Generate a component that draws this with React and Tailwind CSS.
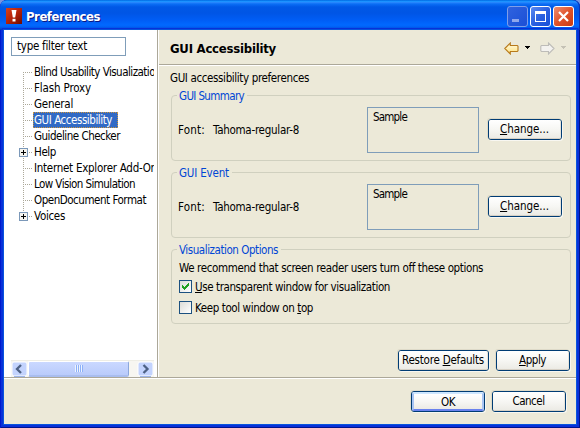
import React, { useLayoutEffect, useRef } from "react";

// Text whose tracking is computed so that it occupies `w` pixels.
function T({ w, className = "", children }) {
  const ref = useRef(null);
  useLayoutEffect(() => {
    const el = ref.current;
    el.style.letterSpacing = "0px";
    const natural = el.getBoundingClientRect().width;
    el.style.letterSpacing = (w - natural) / el.textContent.length + "px";
  }, [w]);
  return (
    <span ref={ref} className={"inline-block whitespace-pre " + className}>
      {children}
    </span>
  );
}

function Key({ children }) {
  return <span className="underline decoration-1 underline-offset-1">{children}</span>;
}

function Button({ className, primary, children }) {
  return (
    <div className={"h-[21px] shrink-0 rounded-[3px] border border-[#003c74] shadow-[1px_1px_0_#f8f7f1,-1px_-1px_0_#dedac8] " + className}>
      <div
        className={
          "flex h-full items-center justify-center rounded-[2px] bg-linear-to-b from-white via-[#f7f7f4] to-[#ecebe5] leading-[16px] " +
          (primary
            ? "border-2 border-t-[#cee7ff] border-x-[#a9c5f3] border-b-[#6982ee]"
            : "border-b border-b-[#d6d0c5] border-r border-r-[#e6e3db]")
        }
      >
        {children}
      </div>
    </div>
  );
}

function Group({ title, w, className, children }) {
  return (
    <section className={"relative rounded-[4px] border border-[#d0d0bf] " + className}>
      <h2 className="absolute -top-[8px] left-[5px] bg-[#ece9d8] pl-[2px] pr-[3px] leading-[16px] text-[#0046d5]">
        <T w={w}>{title}</T>
      </h2>
      {children}
    </section>
  );
}

function FontRow() {
  return (
    <div className="flex pt-[11px] pl-[6px]">
      <div className="flex w-[189px] shrink-0 pt-[15px] leading-[16px]">
        <T w={27} className="mr-[8px]">Font:</T>
        <T w={86}>Tahoma-regular-8</T>
      </div>
      <div className="h-[46px] w-[112px] shrink-0 border border-[#7f9db9] pl-[5px] pt-[1px] leading-[16px]">
        <T w={34}>Sample</T>
      </div>
      <Button className="ml-[9px] mt-[12px] w-[74px]">
        <T w={49}><Key>C</Key>hange...</T>
      </Button>
    </div>
  );
}

const tree = [
  ["Blind Usability Visualization", 127],
  ["Flash Proxy", 57],
  ["General", 39],
  ["GUI Accessibility", 79, "selected"],
  ["Guideline Checker", 86],
  ["Help", 22, "branch"],
  ["Internet Explorer Add-Ons", 128],
  ["Low Vision Simulation", 101],
  ["OpenDocument Format", 112],
  ["Voices", 31, "branch"],
];

function TreeRow({ label, w, kind, first, last }) {
  return (
    <li className="flex h-[16px] leading-[16px]">
      <svg className="h-[16px] w-[22px] shrink-0" viewBox="0 0 22 16" shapeRendering="crispEdges" fill="none">
        <path d={first ? "M12.5 8V16" : last ? "M12.5 0V8" : "M12.5 0V16"} stroke="#aca899" strokeDasharray="1 1" />
        <path d="M12 8.5H21" stroke="#aca899" strokeDasharray="1 1" />
        {kind === "branch" && (
          <g>
            <rect x="8.5" y="4.5" width="8" height="8" rx="1" fill="#f5f4ef" stroke="#7b98b9" />
            <path d="M10 8.5H15M12.5 6V11" stroke="#000" />
          </g>
        )}
      </svg>
      {kind === "selected" ? (
        <span className="h-[16px] w-[85px] bg-[#316ac5] text-white outline-1 -outline-offset-1 outline-dotted outline-[#ce953a]">
          <T w={w} className="pl-px">{label}</T>
        </span>
      ) : (
        <T w={w} className="ml-px">{label}</T>
      )}
    </li>
  );
}

function ScrollArrow({ right }) {
  return (
    <svg className="h-[16px] w-[17px] shrink-0" viewBox="0 0 17 16">
      <rect x="1" y="1" width="15" height="14" rx="2" fill="#c3d3fd" stroke="#fff" />
      <path d="M3 15.5H14" stroke="#9eb5e8" />
      <path d={right ? "M6.5 4L10.5 8L6.5 12" : "M10 4L6 8L10 12"} fill="none" stroke="#4d6185" strokeWidth="2.3" />
    </svg>
  );
}

function NavArrow({ forward }) {
  return (
    <svg className="h-[13px] w-[15px]" viewBox="0 0 15 13">
      <defs>
        <linearGradient id="gold" x1="0" y1="0" x2="0" y2="1">
          <stop offset="0" stopColor="#fffbe4" />
          <stop offset="1" stopColor="#ffe17a" />
        </linearGradient>
      </defs>
      <path
        d={forward ? "M14 6.5L8.5 1V3.5H1.5L.8 4.2V8.8L1.5 9.5H8.5V12Z" : "M.8 6.5L6.3 1V3.5H13.3L14 4.2V8.8L13.3 9.5H6.3V12Z"}
        fill={forward ? "#f3f2ef" : "url(#gold)"}
        stroke={forward ? "#bdbcb8" : "#b7791a"}
        strokeWidth="1.1"
      />
    </svg>
  );
}

function Caret({ className }) {
  return (
    <svg className={"h-[3px] w-[5px] " + className} viewBox="0 0 5 3" shapeRendering="crispEdges" fill="currentColor">
      <path d="M0 0H5V1H4V2H3V3H2V2H1V1H0Z" />
    </svg>
  );
}

function Checkbox({ checked }) {
  return (
    <span className="mr-[3px] flex h-[13px] w-[13px] shrink-0 border border-[#1c5180] bg-linear-to-br from-[#dcdcd7] to-white">
      {checked && (
        <svg className="h-[11px] w-[11px]" viewBox="0 0 11 11" shapeRendering="crispEdges" fill="#21a121">
          <path d="M2 4H3V5H4V6H5V5H6V4H7V3H8V2H9V5H8V6H7V7H6V8H5V9H4V8H3V7H2Z" />
        </svg>
      )}
    </span>
  );
}

export default function App() {
  return (
    <div className="h-[428px] w-[580px] overflow-hidden bg-[#7a96df] font-['DejaVu_Sans_Condensed','DejaVu_Sans',sans-serif] text-[11.5px] text-black [font-stretch:condensed]">
      <div className="flex h-full flex-col rounded-t-[7px] bg-[#0831d9] shadow-[inset_1px_0_0_#0019cf,inset_-1px_0_0_#00138c,inset_0_-1px_0_#00138c]">
        <header className="flex h-[30px] shrink-0 items-start rounded-t-[7px] bg-[linear-gradient(to_bottom,#0458d8_0px,#0997ff_1px,#2e8eff_2px,#0a6ef5_4px,#0058e6_7px,#0055e5_13px,#005df5_20px,#0169ff_25px,#0060f5_27px,#0046d0_29px,#0038bb_30px)] pl-[6px] pr-[6px] pt-[6px] shadow-[inset_-1px_0_0_#0831b9]">
          <svg className="mt-[2px] h-[16px] w-[16px]" viewBox="0 0 16 16">
            <defs>
              <linearGradient id="red" x1="0" y1="0" x2="1" y2="1">
                <stop offset="0" stopColor="#d9411b" />
                <stop offset=".5" stopColor="#b52209" />
                <stop offset="1" stopColor="#6e0b00" />
              </linearGradient>
            </defs>
            <rect width="16" height="16" fill="url(#red)" />
            <path d="M5.5 2H10.5L9.2 9.5H6.8Z" fill="#fff" />
            <rect x="6.5" y="10.8" width="3" height="2.7" fill="#fff" />
          </svg>
          <h1 className="ml-[4px] grow text-[13px] font-bold leading-[22px] text-white [text-shadow:1px_1px_0_#0a1883]">
            <T w={74}>Preferences</T>
          </h1>
          <div className="flex gap-[2px] text-white">
            <div className="h-[21px] w-[21px] rounded-[3px] border border-[#7f9ee8] bg-linear-to-br from-[#2f62df] to-[#1b4fd6]">
              <div className="ml-[4px] mt-[12px] h-[3px] w-[7px] bg-[#8fa7ec]" />
            </div>
            <div className="h-[21px] w-[21px] rounded-[3px] border border-white bg-linear-to-br from-[#5b8af0] via-[#2a60e0] to-[#1550d8]">
              <div className="ml-[4px] mt-[4px] h-[11px] w-[11px] border border-t-[3px] border-white" />
            </div>
            <div className="h-[21px] w-[21px] rounded-[3px] border border-white bg-linear-to-br from-[#ec8c6f] via-[#e0522a] to-[#c83a10]">
              <svg className="h-[19px] w-[19px]" viewBox="0 0 19 19">
                <path d="M5 5L14 14M14 5L5 14" stroke="#fff" strokeWidth="2.2" />
              </svg>
            </div>
          </div>
        </header>

        <div className="mx-[4px] mb-[4px] flex grow flex-col bg-[#ece9d8] shadow-[0_0_0_1px_#0855dd,0_0_0_2px_#0831d9]">
          <div className="flex h-[347px] shrink-0">
            <aside className="flex w-[153px] shrink-0 flex-col bg-white pl-[7px] pr-[3px] pt-[7px]">
              <div className="h-[19px] w-[115px] border border-[#7f9db9] pl-[5px] leading-[17px]">
                <T w={70}>type filter text</T>
              </div>
              <ul className="mt-[8px] grow overflow-hidden">
                {tree.map(([label, w, kind], i) => (
                  <TreeRow key={label} label={label} w={w} kind={kind} first={i === 0} last={i === tree.length - 1} />
                ))}
              </ul>
              <div className="flex h-[17px] border-t border-[#eeede5] bg-[#f7f6f1]">
                <ScrollArrow />
                <div className="flex w-[101px] items-center justify-center gap-px rounded-[2px] border border-b-2 border-white border-b-[#a9bdee] border-r-[#8ba7dc] bg-linear-to-b from-[#cad8ff] to-[#b9cbfb]">
                  {[0, 1, 2, 3].map((i) => (
                    <i key={i} className="h-[7px] w-px bg-[#eef4fe] shadow-[1px_0_0_#8cb0f8]" />
                  ))}
                </div>
                <span className="grow" />
                <ScrollArrow right />
              </div>
            </aside>
            <div className="w-[2px] shrink-0 border-l border-[#aca899] bg-white" />

            <main className="flex grow flex-col">
              <div className="flex h-[36px] shrink-0 border-b border-white">
                <div className="flex h-[35px] grow border-b border-[#aca899] pl-[11px] pr-[10px]">
                  <h2 className="grow pt-[10px] text-[13px] font-bold leading-[17px]">
                    <T w={106}>GUI Accessibility</T>
                  </h2>
                  <div className="flex pt-[12px]">
                    <NavArrow />
                    <Caret className="ml-[6px] mt-[4px]" />
                    <span className="w-[10px]" />
                    <NavArrow forward />
                    <Caret className="ml-[6px] mt-[4px] text-[#c5c2b5]" />
                  </div>
                </div>
              </div>
              <div className="pl-[12px] pr-[5px] pt-[4px]">
                <p className="-ml-px leading-[16px]">
                  <T w={139}>GUI accessibility preferences</T>
                </p>
                <Group title="GUI Summary" w={65} className="mt-[9px] h-[66px]">
                  <FontRow />
                </Group>
                <Group title="GUI Event" w={50} className="mt-[11px] h-[66px]">
                  <FontRow />
                </Group>
                <Group title="Visualization Options" w={99} className="mt-[11px] h-[75px] pl-[7px] pt-[10px]">
                  <p className="h-[16px] leading-[16px]">
                    <T w={304}>We recommend that screen reader users turn off these options</T>
                  </p>
                  <div className="mt-[4px] flex h-[13px] leading-[14px]">
                    <Checkbox checked />
                    <T w={195}><Key>U</Key>se transparent window for visualization</T>
                  </div>
                  <div className="mt-[8px] flex h-[13px] leading-[14px]">
                    <Checkbox />
                    <T w={118}>Keep tool window on <Key>t</Key>op</T>
                  </div>
                </Group>
                <div className="mr-px mt-[26px] flex justify-end gap-[7px]">
                  <Button className="w-[91px]">
                    <T w={82}>Restore <Key>D</Key>efaults</T>
                  </Button>
                  <Button className="w-[74px]">
                    <T w={27}><Key>A</Key>pply</T>
                  </Button>
                </div>
              </div>
            </main>
          </div>
          <footer className="grow border-t border-[#aca899]">
            <div className="flex justify-end gap-[7px] border-t border-white pr-[10px] pt-[12px]">
              <Button primary className="w-[74px]">
                <T w={14}>OK</T>
              </Button>
              <Button className="w-[74px]">
                <T w={32}>Cancel</T>
              </Button>
            </div>
          </footer>
        </div>
      </div>
    </div>
  );
}
